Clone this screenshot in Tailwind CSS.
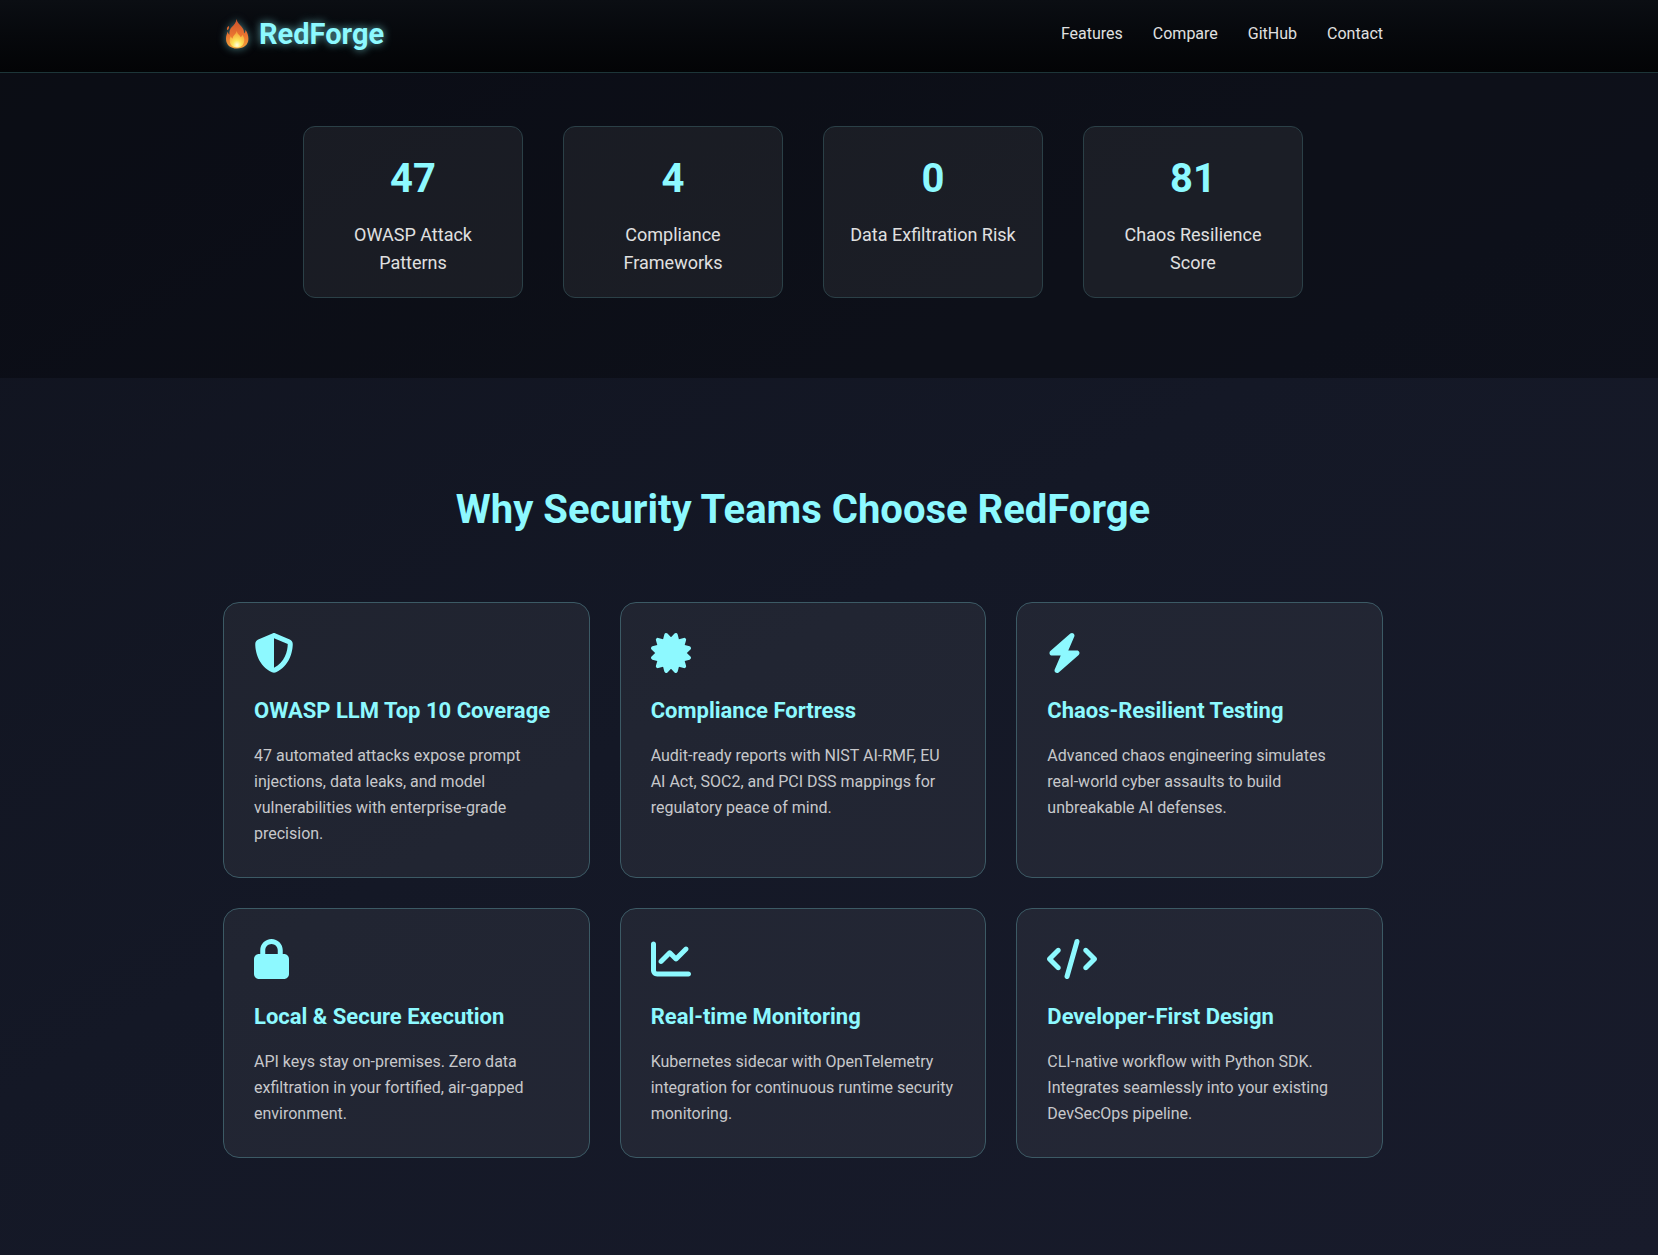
<!DOCTYPE html>
<html lang="en">
<head>
<meta charset="utf-8">
<meta name="viewport" content="width=device-width, initial-scale=1">
<title>RedForge</title>
<script src="https://cdn.jsdelivr.net/npm/@tailwindcss/browser@4"></script>
</head>
<body class="min-h-screen overflow-x-hidden bg-[#141724] bg-linear-150 from-[#10131e] via-[#141826] to-[#181b2b] font-[Roboto,sans-serif] text-base text-[#e0e0e0]">
<header class="border-b border-[#1d3538] bg-linear-to-b from-[#0b0e13] to-[#030406] pt-[11px] pb-[15px] pr-[52px]">
  <div class="mx-auto flex max-w-[1200px] items-center justify-between px-5">
    <a href="#" class="flex items-center gap-2 text-[29px] leading-[46px] font-bold text-[#8df9ff] [text-shadow:0_0_8px_#8df9ffb3]">
      <svg class="h-8 w-7 drop-shadow-[0_0_4px_#8df9ff80]" viewBox="0 0 28 32" aria-hidden="true">
        <defs>
          <linearGradient id="flame" x1="0" y1="0" x2="0" y2="1"><stop offset="0" stop-color="#c9502c"/><stop offset=".55" stop-color="#ea7430"/><stop offset="1" stop-color="#f0a13a"/></linearGradient>
          <radialGradient id="core" cx=".5" cy=".85" r=".7"><stop offset="0" stop-color="#fffde0"/><stop offset=".4" stop-color="#fde75a"/><stop offset="1" stop-color="#f5a93c"/></radialGradient>
        </defs>
        <path fill="url(#flame)" d="M13.500 1c.6 3.700 3.400 5.500 5.300 8 1.500 1.800 2.400 3.700 2.200 6.500 1-.8 1.500-2 1.500-3.700 2 3 2.900 6 2.900 9 0 6-4.400 9.700-11.300 9.700S3 26.700 3 20.700c0-3 .9-5 1.800-7.300.2 1.500.7 2.600 1.700 3.300-.4-3.600.5-6 2.600-8 2-2 4-4 4.400-7.700zM5.900 8c.6 1.800-.2 3.500-1.700 4.300-.8-1.800-.1-3.500 1.700-4.300z"/>
        <path fill="url(#core)" d="M13.800 13c.3 3 3.200 4 3.900 6.200.9-.5 1.400-1.300 1.600-2.400 1.600 2.400 2.200 3.500 2 5.700-.4 4.600-3.100 7-7.400 7s-7-2.500-7.200-6.700c-.1-1.700.4-3.400 1.100-4.500.4 1.300 1.100 2 2 2.200-.2-2.900 3.200-4.200 4-7.500z"/>
      </svg>
      RedForge
    </a>
    <nav class="flex gap-[30px]">
      <a href="#features">Features</a>
      <a href="#compare">Compare</a>
      <a href="#github">GitHub</a>
      <a href="#contact">Contact</a>
    </nav>
  </div>
</header>
<main>
  <section class="bg-black/30 pt-[53px] pr-[52px] pb-20">
    <div class="mx-auto grid max-w-[1000px] grid-cols-4 gap-10 text-center text-[18px] leading-[28px]">
      <div class="rounded-xl border border-[#2b4047] bg-white/6 p-5">
        <div class="mb-[10px] text-[40px] leading-[64px] font-bold text-[#8df9ff]">47</div>
        <div>OWASP Attack Patterns</div>
      </div>
      <div class="rounded-xl border border-[#2b4047] bg-white/6 p-5">
        <div class="mb-[10px] text-[40px] leading-[64px] font-bold text-[#8df9ff]">4</div>
        <div>Compliance Frameworks</div>
      </div>
      <div class="rounded-xl border border-[#2b4047] bg-white/6 p-5">
        <div class="mb-[10px] text-[40px] leading-[64px] font-bold text-[#8df9ff]">0</div>
        <div>Data Exfiltration Risk</div>
      </div>
      <div class="rounded-xl border border-[#2b4047] bg-white/6 p-5">
        <div class="mb-[10px] text-[40px] leading-[64px] font-bold text-[#8df9ff]">81</div>
        <div>Chaos Resilience Score</div>
      </div>
    </div>
  </section>
  <section id="features" class="pt-[100px] pr-[52px] pb-[98px]">
    <div class="mx-auto max-w-[1200px] px-5">
      <h2 class="mb-[60px] text-center text-[40px] leading-[64px] font-bold text-[#8df9ff]">Why Security Teams Choose RedForge</h2>
      <div class="grid grid-cols-3 gap-[30px] leading-[26px] text-[#c7c8cb]">
        <article class="rounded-2xl border border-[#3c5a65] bg-white/6 p-[30px]">
          <svg class="mb-5 h-10 w-10 fill-[#8df9ff]" viewBox="0 0 512 512" aria-hidden="true"><path d="M256 0c4.600 0 9.200 1 13.400 2.900L457.700 82.800c22 9.300 38.400 31 38.300 57.200c-.5 99.200-41.300 280.700-213.600 363.200c-16.700 8-36.100 8-52.800 0C57.300 420.700 16.500 239.200 16 140c-.1-26.200 16.300-47.900 38.300-57.200L242.700 2.900C246.800 1 251.400 0 256 0zm0 66.800V444.800C394 378 431.100 230.100 432 141.400L256 66.800z"/></svg>
          <h3 class="mb-[14px] text-[22px] leading-9 font-bold text-[#8df9ff]">OWASP LLM Top 10 Coverage</h3>
          <p>47 automated attacks expose prompt injections, data leaks, and model vulnerabilities with enterprise-grade precision.</p>
        </article>
        <article class="rounded-2xl border border-[#3c5a65] bg-white/6 p-[30px]">
          <svg class="mb-5 h-10 w-10 fill-[#8df9ff]" viewBox="0 0 512 512" aria-hidden="true"><path d="M211 7.300C205 1 196-1.400 187.600 .8s-14.900 8.900-17.100 17.300L154.700 80.600l-62-17.500c-8.400-2.400-17.400 0-23.500 6.100s-8.500 15.100-6.100 23.500l17.500 62L18.100 170.600c-8.400 2.100-15 8.700-17.300 17.100S1 205 7.300 211l46.200 45L7.300 301C1 307-1.400 316 .8 324.400s8.900 14.900 17.300 17.100l62.500 15.800-17.500 62c-2.400 8.400 0 17.400 6.100 23.500s15.100 8.500 23.500 6.100l62-17.500 15.800 62.500c2.100 8.400 8.700 15 17.100 17.300s17.300-.2 23.400-6.400l45-46.200 45 46.200c6.100 6.200 15 8.700 23.400 6.400s14.900-8.900 17.100-17.300l15.800-62.500 62 17.500c8.400 2.400 17.400 0 23.500-6.100s8.500-15.100 6.100-23.500l-17.500-62 62.500-15.800c8.400-2.100 15-8.700 17.300-17.100s-.2-17.400-6.400-23.400l-46.200-45 46.200-45c6.200-6.100 8.700-15 6.400-23.400s-8.900-14.900-17.300-17.100l-62.500-15.800 17.500-62c2.400-8.400 0-17.400-6.100-23.500s-15.100-8.500-23.500-6.100l-62 17.500L341.400 18.100c-2.100-8.400-8.700-15-17.100-17.300S307 1 301 7.300L256 53.500 211 7.300z"/></svg>
          <h3 class="mb-[14px] text-[22px] leading-9 font-bold text-[#8df9ff]">Compliance Fortress</h3>
          <p>Audit-ready reports with NIST AI-RMF, EU AI Act, SOC2, and PCI DSS mappings for regulatory peace of mind.</p>
        </article>
        <article class="rounded-2xl border border-[#3c5a65] bg-white/6 p-[30px]">
          <svg class="mb-5 h-10 w-[35px] fill-[#8df9ff]" viewBox="0 0 448 512" aria-hidden="true"><path d="M349.400 44.600c5.900-13.700 1.500-29.700-10.600-38.500s-28.600-8-39.900 1.800l-256 224c-10 8.800-13.600 22.900-8.900 35.300S50.700 288 64 288H175.500L98.600 467.400c-5.900 13.700-1.500 29.700 10.600 38.500s28.600 8 39.900-1.800l256-224c10-8.800 13.600-22.900 8.900-35.300s-16.600-20.700-30-20.700H272.500L349.400 44.600z"/></svg>
          <h3 class="mb-[14px] text-[22px] leading-9 font-bold text-[#8df9ff]">Chaos-Resilient Testing</h3>
          <p>Advanced chaos engineering simulates real-world cyber assaults to build unbreakable AI defenses.</p>
        </article>
        <article class="rounded-2xl border border-[#3c5a65] bg-white/6 p-[30px]">
          <svg class="mb-5 h-10 w-[35px] fill-[#8df9ff]" viewBox="0 0 448 512" aria-hidden="true"><path d="M144 144v48H304V144c0-44.200-35.800-80-80-80s-80 35.800-80 80zM80 192V144C80 64.500 144.500 0 224 0s144 64.500 144 144v48h16c35.300 0 64 28.700 64 64V448c0 35.300-28.700 64-64 64H64c-35.300 0-64-28.700-64-64V256c0-35.300 28.700-64 64-64H80z"/></svg>
          <h3 class="mb-[14px] text-[22px] leading-9 font-bold text-[#8df9ff]">Local &amp; Secure Execution</h3>
          <p>API keys stay on-premises. Zero data exfiltration in your fortified, air-gapped environment.</p>
        </article>
        <article class="rounded-2xl border border-[#3c5a65] bg-white/6 p-[30px]">
          <svg class="mb-5 h-10 w-10 fill-[#8df9ff]" viewBox="0 0 512 512" aria-hidden="true"><path d="M64 64c0-17.700-14.300-32-32-32S0 46.300 0 64V400c0 44.200 35.800 80 80 80H480c17.700 0 32-14.300 32-32s-14.300-32-32-32H80c-8.800 0-16-7.200-16-16V64zm406.600 86.600c12.500-12.500 12.500-32.800 0-45.300s-32.800-12.500-45.300 0L320 210.700l-57.400-57.400c-12.500-12.500-32.800-12.500-45.300 0l-112 112c-12.500 12.500-12.500 32.800 0 45.300s32.800 12.500 45.300 0L240 221.300l57.400 57.400c12.500 12.500 32.800 12.500 45.300 0l128-128z"/></svg>
          <h3 class="mb-[14px] text-[22px] leading-9 font-bold text-[#8df9ff]">Real-time Monitoring</h3>
          <p>Kubernetes sidecar with OpenTelemetry integration for continuous runtime security monitoring.</p>
        </article>
        <article class="rounded-2xl border border-[#3c5a65] bg-white/6 p-[30px]">
          <svg class="mb-5 h-10 w-[50px] fill-[#8df9ff]" viewBox="0 0 640 512" aria-hidden="true"><path d="M392.800 1.200c-17-4.900-34.700 5-39.600 22l-128 448c-4.900 17 5 34.700 22 39.600s34.700-5 39.600-22l128-448c4.900-17-5-34.700-22-39.600zm80.600 120.100c-12.500 12.500-12.500 32.800 0 45.300L562.700 256l-89.400 89.400c-12.500 12.500-12.500 32.800 0 45.300s32.800 12.500 45.300 0l112-112c12.500-12.500 12.500-32.800 0-45.300l-112-112c-12.500-12.500-32.800-12.500-45.300 0zm-306.700 0c-12.500-12.500-32.800-12.500-45.300 0l-112 112c-12.500 12.500-12.500 32.800 0 45.300l112 112c12.500 12.500 32.800 12.500 45.300 0s12.500-32.800 0-45.300L77.300 256l89.400-89.400c12.500-12.500 12.500-32.800 0-45.300z"/></svg>
          <h3 class="mb-[14px] text-[22px] leading-9 font-bold text-[#8df9ff]">Developer-First Design</h3>
          <p>CLI-native workflow with Python SDK. Integrates seamlessly into your existing DevSecOps pipeline.</p>
        </article>
      </div>
    </div>
  </section>
</main>
</body>
</html>
